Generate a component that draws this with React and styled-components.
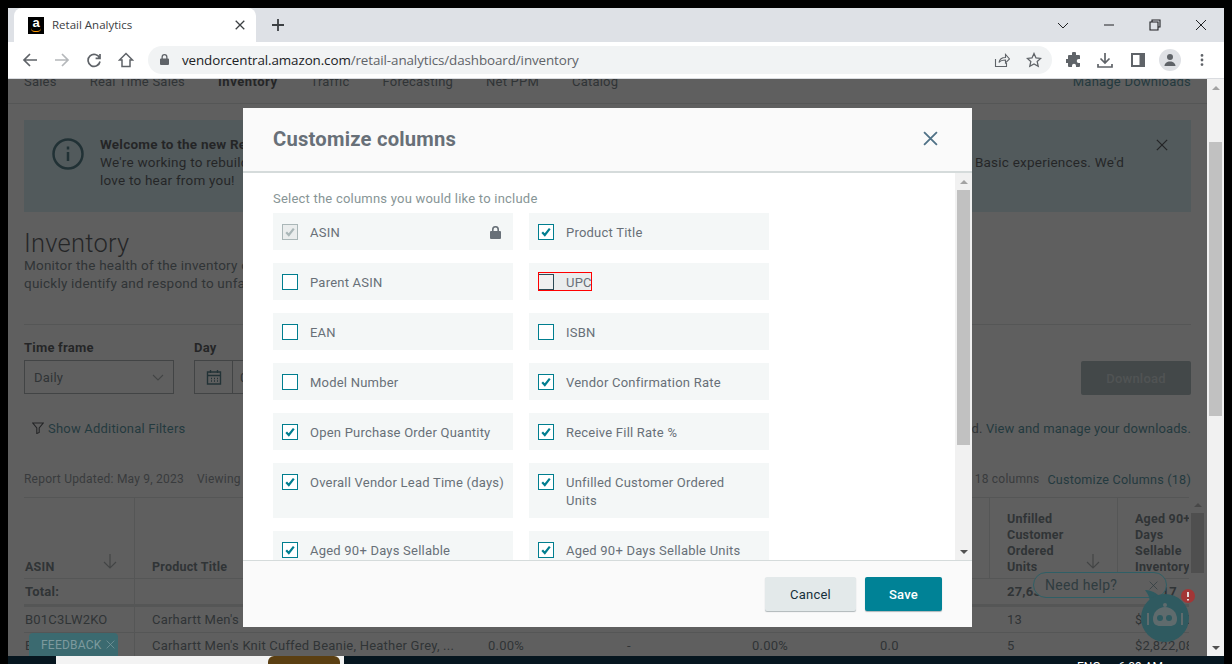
import React from 'react'
import styled, { createGlobalStyle } from 'styled-components'

const GlobalStyle = createGlobalStyle`
  html, body {
    margin: 0;
    padding: 0;
    background: #000;
    overflow: hidden;
  }
  * {
    box-sizing: border-box;
  }
`

const pageFont = `Roboto, "Liberation Sans", sans-serif`

const Screen = styled.div`
  width: 1232px;
  height: 664px;
  padding: 8px 8px 0;
  background: #000;
  overflow: hidden;
`

const Browser = styled.div`
  display: flex;
  flex-direction: column;
  height: 656px;
  font-family: ${pageFont};
`

/* browser chrome */
const TabStrip = styled.div`
  display: flex;
  align-items: stretch;
  flex: 0 0 34px;
  padding-left: 6px;
  background: #dee1e6;
`

const Tab = styled.div`
  display: flex;
  align-items: center;
  width: 242px;
  padding: 0 11px 0 14px;
  background: #fff;
  border-radius: 8px 8px 0 0;
  color: #3c4043;
  font-family: "Open Sans", sans-serif;
  font-size: 11.5px;
`

const Favicon = styled.span`
  position: relative;
  display: flex;
  justify-content: center;
  width: 16px;
  height: 17px;
  margin-right: 8px;
  background: #000;
  color: #fff;
  font-family: "Liberation Sans", sans-serif;
  font-size: 13px;
  font-weight: 700;
  line-height: 12px;

  &::after {
    content: '';
    position: absolute;
    left: 3px;
    right: 3px;
    bottom: 2px;
    height: 3px;
    border-bottom: 1.5px solid #f90;
    border-radius: 0 0 6px 6px;
  }
`

const TabTitle = styled.span`
  flex: 1;
  padding-bottom: 2px;
`

const NewTab = styled.div`
  display: flex;
  align-items: center;
  margin-left: 15px;
  color: #3c4043;
`

const WindowControls = styled.div`
  display: flex;
  align-items: center;
  gap: 34px;
  margin-left: auto;
  padding-right: 17px;
  color: #202124;
`

const Toolbar = styled.div`
  display: flex;
  align-items: center;
  flex: 0 0 37px;
  padding: 0 12px 1px 14px;
  background: #fff;
  border-bottom: 1px solid #dadce0;
`

const NavIcons = styled.div`
  display: flex;
  align-items: center;
  gap: 16px;
  width: 126px;
  color: #5f6368;
`

const Omnibox = styled.div`
  display: flex;
  align-items: center;
  width: 904px;
  height: 28px;
  padding: 0 10px 0 11px;
  border-radius: 14px;
  background: #f1f3f4;
  color: #5f6368;
`

const Url = styled.span`
  flex: 1;
  margin-left: 12px;
  color: #5f6368;
  font-family: "Open Sans", sans-serif;
  font-size: 13.4px;
  letter-spacing: -0.1px;

  b {
    color: #202124;
    font-weight: 400;
  }
`

const OmniActions = styled.div`
  display: flex;
  align-items: center;
  gap: 16px;
`

const ToolActions = styled.div`
  display: flex;
  align-items: center;
  gap: 15px;
  margin-left: 14px;
  color: #5f6368;
`

const SidebarIcon = styled.span`
  display: flex;
  margin: 0 -1px 0 3px;
`

const Avatar = styled.span`
  display: flex;
  align-items: center;
  justify-content: center;
  width: 22px;
  height: 22px;
  border-radius: 50%;
  background: #dfe1e5;
`

/* the page behind the dialog */
const Main = styled.div`
  display: flex;
  flex: 1;
  min-height: 0;
`

const Viewport = styled.div`
  position: relative;
  flex: 1;
  min-width: 0;
  overflow: hidden;
  background: #fff;
  color: #16191f;
  font-size: 13px;
  letter-spacing: 0.22px;
`

const Page = styled.div`
  margin-top: -8px;
  padding: 0 16px;
`

const NavBar = styled.div`
  display: flex;
  align-items: center;
  height: 33px;
  margin: 0 -16px;
  padding: 0 16px 12px;
  border-bottom: 1px solid #d5dbdb;
`

const NavItem = styled.span`
  margin-right: 33px;
  color: ${props => (props.$active ? '#16191f' : '#44545c')};
  font-weight: ${props => (props.$active ? 700 : 400)};
  letter-spacing: ${props => (props.$active ? 0.5 : 0.22)}px;
`

const NavRight = styled.span`
  margin-left: auto;
  color: #0f6d80;
`

const Banner = styled.div`
  position: relative;
  display: flex;
  gap: 16px;
  height: 92px;
  margin-top: 16px;
  padding: 14px 67px 0 28px;
  background: #caeaf2;
  line-height: 18px;
`

const BannerIcon = styled.span`
  padding-top: 4px;
`

const BannerText = styled.div`
  flex: 1;
  padding-top: 1px;
  font-size: 13.5px;
`

const BannerLine = styled.div`
  display: flex;
  justify-content: space-between;
`

const BannerClose = styled.span`
  position: absolute;
  top: 18px;
  right: 23px;
  color: #16191f;
`

const Heading = styled.h1`
  margin: 19px 0 0;
  color: #16191f;
  font-size: 25.5px;
  font-weight: 300;
  line-height: 25px;
`

const Intro = styled.p`
  margin: 0;
  padding-bottom: 32px;
  border-bottom: 1px solid #d5dbdb;
  color: #44545c;
  font-size: 13.5px;
  line-height: 18px;
`

const FilterRow = styled.div`
  display: flex;
  align-items: flex-start;
  height: 55px;
  margin-top: 14px;
`

const Field = styled.div`
  display: flex;
  flex-direction: column;
  gap: 4px;
  width: ${props => props.$width}px;
  margin-right: 20px;
`

const FieldLabel = styled.span`
  padding-top: 1px;
  font-weight: 700;
  line-height: 16px;
`

const SelectBox = styled.div`
  display: flex;
  align-items: center;
  justify-content: space-between;
  height: 34px;
  padding: 0 9px;
  border: 1px solid #8d9596;
  color: #44545c;
`

const DateBox = styled.div`
  display: flex;
  align-items: center;
  height: 34px;
  border: 1px solid #8d9596;
  color: #44545c;
`

const DateIcon = styled.span`
  display: flex;
  align-items: center;
  justify-content: center;
  width: 38px;
  height: 100%;
  margin-right: 7px;
  border-right: 1px solid #8d9596;
  color: #0f4c5c;
`

const DownloadButton = styled.div`
  display: flex;
  align-items: center;
  justify-content: center;
  width: 110px;
  height: 34px;
  margin: 22px 0 0 auto;
  border-radius: 2px;
  background: #8ea2a6;
  color: #c4d0d2;
  font-weight: 500;
`

const LinkRow = styled.div`
  display: flex;
  align-items: center;
  justify-content: space-between;
  height: 18px;
  margin-top: 25px;
  padding-left: 8px;
  color: #0f6d80;
  letter-spacing: 0.12px;
`

const FilterLink = styled.span`
  display: flex;
  align-items: center;
  gap: 4px;
  letter-spacing: 0.2px;
`

const PlainText = styled.span`
  color: #44545c;
`

const ReportRow = styled.div`
  display: flex;
  align-items: center;
  height: 18px;
  margin-top: 33px;
  color: #687078;
  font-size: 12px;
`

const ReportViewing = styled.span`
  margin-left: 13px;
`

const ColumnCount = styled.span`
  margin-left: auto;
`

const CustomizeLink = styled.span`
  margin-left: 8px;
  color: #0f6d80;
  font-size: 12.6px;
`

const TableWrap = styled.div`
  display: flex;
  gap: 2px;
  margin-top: 9px;
  margin-right: -16px;
`

const Table = styled.div`
  width: 1165px;
  overflow: hidden;
  border-top: 1px solid #d5dbdb;
`

const Row = styled.div`
  display: grid;
  grid-template-columns: 111px 336px 139px 125px 128px 127px 128px 200px;
  width: 1300px;
  height: ${props => props.$height}px;
  border-bottom: ${props => (props.$heavy ? 3 : 1)}px solid #d5dbdb;
  font-weight: ${props => (props.$bold ? 700 : 400)};
`

const Cell = styled.div`
  display: flex;
  align-items: center;
  padding-left: 17px;
  border-right: 1px solid ${props => (props.$lined ? '#d5dbdb' : 'transparent')};
  color: #44545c;
  white-space: nowrap;

  &:first-child {
    padding-left: 1px;
  }
`

const HeadCell = styled.div`
  position: relative;
  display: flex;
  align-items: flex-end;
  padding: 0 26px 3px 17px;
  border-right: 1px solid #d5dbdb;
  color: #44545c;
  font-size: 12.5px;
  font-weight: 700;
  line-height: 16px;

  &:first-child {
    padding-left: 1px;
  }
`

const SortArrow = styled.span`
  position: absolute;
  right: 16px;
  bottom: 5px;
  color: #8d9596;
`

const InnerScroll = styled.div`
  display: flex;
  flex-direction: column;
  flex: 0 0 13px;
  height: 76px;
`

const InnerThumb = styled.div`
  flex: 0 0 60px;
  background: #c0c0c0;
`

/* widgets that float above everything, so their colours are the ones on screen */
const FeedbackTab = styled.div`
  position: absolute;
  left: 21px;
  bottom: 0;
  display: flex;
  align-items: center;
  gap: 4px;
  width: 89px;
  height: 23px;
  padding-left: 12px;
  border-radius: 4px 4px 0 0;
  background: #3b6a70;
  color: #7d9a9e;
  font-size: 12px;
`

const HelpBubble = styled.div`
  position: absolute;
  left: 1025px;
  top: 493px;
  display: flex;
  align-items: center;
  justify-content: space-between;
  width: 134px;
  height: 26px;
  padding: 0 8px 0 11px;
  border: 1px solid #2f5f66;
  border-radius: 13px;
  background: #5f5f5f;
  color: #2f3c40;
  font-size: 14px;
  letter-spacing: 0.3px;
`

const Bot = styled.svg`
  position: absolute;
  left: 1132px;
  top: 506px;
`

const PageScroll = styled.div`
  display: flex;
  flex-direction: column;
  flex: 0 0 17px;
  padding: 0 2px;
  background: #f1f1f1;
`

const ScrollArrow = styled.div`
  display: flex;
  justify-content: center;
  flex: 0 0 ${props => props.$size || 17}px;
  align-items: center;
  color: ${props => (props.$dark ? '#505050' : '#a3a3a3')};

  &::after {
    content: '';
    border-left: 4px solid transparent;
    border-right: 4px solid transparent;
    border-${props => (props.$down ? 'top' : 'bottom')}: 4px solid currentColor;
  }
`

const ScrollThumb = styled.div`
  flex: 0 0 ${props => props.$height}px;
  margin-top: ${props => props.$top}px;
  background: #c1c1c1;
`

const ScrollSpace = styled.div`
  flex: 1;
`

const Taskbar = styled.div`
  display: flex;
  flex: 0 0 8px;
  overflow: hidden;
  background: #06161f;
  color: #fff;
  font-size: 12px;
`

const TaskbarPanel = styled.div`
  display: flex;
  justify-content: flex-end;
  width: 288px;
  height: 8px;
  margin-left: 48px;
  padding-right: 4px;
  background: #f3f3f3;
`

const TaskbarThumb = styled.div`
  width: 72px;
  height: 8px;
  border-radius: 6px 6px 0 0;
  background: #5b3f12;
`

const TaskbarClock = styled.div`
  display: flex;
  gap: 18px;
  margin-left: 733px;
  padding-top: 4px;
  line-height: 14px;
`

/* dialog */
const Overlay = styled.div`
  position: absolute;
  inset: 0;
  display: flex;
  justify-content: center;
  align-items: flex-start;
  padding-top: 29px;
  background: rgba(42, 42, 42, 0.75);
`

const Modal = styled.div`
  display: flex;
  flex-direction: column;
  width: 729px;
  height: 519px;
  background: #fff;
  font-size: 13px;
`

const ModalHeader = styled.div`
  display: flex;
  align-items: center;
  justify-content: space-between;
  flex: 0 0 65px;
  padding: 0 34px 2px 30px;
  background: #fafafa;
  border-bottom: 2px solid #d5dbdb;
`

const ModalTitle = styled.h2`
  margin: 0;
  color: #687078;
  font-size: 20.2px;
  font-weight: 700;
`

const CloseButton = styled.span`
  display: flex;
  color: #4f7186;
`

const ModalBody = styled.div`
  display: flex;
  flex: 1;
  min-height: 0;
`

const ModalContent = styled.div`
  flex: 1;
  overflow: hidden;
  padding: 17px 0 0 30px;
`

const Hint = styled.p`
  margin: 0 0 5px;
  color: #879596;
  font-size: 13px;
  line-height: 18px;
`

const ColumnGrid = styled.div`
  display: grid;
  grid-template-columns: 240px 240px;
  gap: 13px 16px;
`

const Option = styled.div`
  display: flex;
  align-items: flex-start;
  padding: 10px 0 8px 9px;
  background: #f4f7f7;
`

const Highlight = styled.span`
  display: flex;
  width: 52px;
  height: 17px;
  margin-left: 1px;
  background: #eaeded;
  outline: 1px solid #f00;
`

const Check = styled.span`
  display: flex;
  align-items: center;
  justify-content: center;
  flex: 0 0 16px;
  height: 16px;
  margin: 1px 12px 0 ${props => (props.$hover ? -1 : 0)}px;
  border: 1px solid ${props => (props.$disabled ? '#aab7b8' : props.$hover ? '#2b4a55' : '#007e8f')};
  background: ${props => (props.$disabled ? '#eaeded' : props.$hover ? '#f0f0f0' : '#fff')};
  color: ${props => (props.$disabled ? '#aab7b8' : '#007e8f')};
`

const OptionLabel = styled.span`
  max-width: ${props => (props.$wrapAt ? `${props.$wrapAt}px` : 'none')};
  margin-top: 1px;
  color: #687078;
  line-height: 18px;
  white-space: ${props => (props.$wrapAt ? 'normal' : 'nowrap')};
`

const LockIcon = styled.svg`
  margin: 3px 12px 0 auto;
  color: #687078;
`

const ModalFooter = styled.div`
  display: flex;
  align-items: center;
  justify-content: flex-end;
  gap: 9px;
  flex: 0 0 67px;
  padding: 0 30px 0 0;
  background: #fafafa;
  border-top: 1px solid #d5dbdb;
`

const FooterButton = styled.button`
  width: ${props => props.$width}px;
  height: 34px;
  border: 0;
  border-radius: 2px;
  background: ${props => (props.$primary ? '#008296' : '#e3e9ea')};
  box-shadow: 0 1px 1px rgba(0, 28, 36, 0.3);
  color: ${props => (props.$primary ? '#fff' : '#16303a')};
  font-family: inherit;
  font-size: 13px;
  letter-spacing: 0.22px;
  font-weight: ${props => (props.$primary ? 500 : 400)};
`

const Glyph = ({ size = 16, children, fill = 'none', stroke = 'currentColor', width = 2, view = 24 }) => (
  <svg
    width={size}
    height={size}
    viewBox={`0 0 ${view} ${view}`}
    fill={fill}
    stroke={stroke}
    strokeWidth={width}
  >
    {children}
  </svg>
)

const Cross = ({ size = 14, width = 1.6 }) => (
  <Glyph size={size} view={14} width={width}>
    <path d="M1 1l12 12M13 1L1 13" />
  </Glyph>
)

const Tick = () => (
  <Glyph size={12} view={12} width={2.2}>
    <path d="M2.2 6.2l2.6 2.8 5-6.4" />
  </Glyph>
)

const DownArrow = () => (
  <Glyph size={16} view={16} width={1.2}>
    <path d="M8 1v14M2 9l6 6 6-6" />
  </Glyph>
)

const options = [
  { label: 'ASIN', state: 'disabled' },
  { label: 'Product Title', state: 'on' },
  { label: 'Parent ASIN', state: 'off' },
  { label: 'UPC', state: 'hover' },
  { label: 'EAN', state: 'off' },
  { label: 'ISBN', state: 'off' },
  { label: 'Model Number', state: 'off' },
  { label: 'Vendor Confirmation Rate', state: 'on' },
  { label: 'Open Purchase Order Quantity', state: 'on' },
  { label: 'Receive Fill Rate %', state: 'on' },
  { label: 'Overall Vendor Lead Time (days)', state: 'on' },
  { label: 'Unfilled Customer Ordered Units', state: 'on', wrapAt: 175 },
  { label: 'Aged 90+ Days Sellable', state: 'on' },
  { label: 'Aged 90+ Days Sellable Units', state: 'on' },
]

const ColumnOption = ({ label, state, wrapAt }) => {
  const box = (
    <Check $disabled={state === 'disabled'} $hover={state === 'hover'}>
      {(state === 'on' || state === 'disabled') && <Tick />}
    </Check>
  )
  if (state === 'hover') {
    return (
      <Option>
        <Highlight>
          {box}
          <OptionLabel>{label}</OptionLabel>
        </Highlight>
      </Option>
    )
  }
  return (
    <Option>
      {box}
      <OptionLabel $wrapAt={wrapAt}>{label}</OptionLabel>
      {state === 'disabled' && (
        <LockIcon width="11" height="13" viewBox="0 0 11 13" fill="currentColor">
          <path d="M5.5 0A3.4 3.4 0 0 0 2 3.4V5H1a1 1 0 0 0-1 1v6a1 1 0 0 0 1 1h9a1 1 0 0 0 1-1V6a1 1 0 0 0-1-1H9V3.4A3.4 3.4 0 0 0 5.5 0zM3.6 5V3.4a1.9 1.9 0 0 1 3.8 0V5z" />
        </LockIcon>
      )}
    </Option>
  )
}

const CustomizeDialog = () => (
  <Overlay>
    <Modal>
      <ModalHeader>
        <ModalTitle>Customize columns</ModalTitle>
        <CloseButton>
          <Cross size={15} width={1.7} />
        </CloseButton>
      </ModalHeader>
      <ModalBody>
        <ModalContent>
          <Hint>Select the columns you would like to include</Hint>
          <ColumnGrid>
            {options.map(option => (
              <ColumnOption key={option.label} {...option} />
            ))}
          </ColumnGrid>
        </ModalContent>
        <PageScroll>
          <ScrollArrow />
          <ScrollThumb $height={255} $top={0} />
          <ScrollSpace />
          <ScrollArrow $down $dark />
        </PageScroll>
      </ModalBody>
      <ModalFooter>
        <FooterButton $width={91}>Cancel</FooterButton>
        <FooterButton $width={77} $primary>Save</FooterButton>
      </ModalFooter>
    </Modal>
  </Overlay>
)

const BrowserChrome = () => (
  <>
    <TabStrip>
      <Tab>
        <Favicon>a</Favicon>
        <TabTitle>Retail Analytics</TabTitle>
        <Cross size={10} width={1.8} />
      </Tab>
      <NewTab>
        <Glyph size={14} view={14} width={1.8}>
          <path d="M7 1v12M1 7h12" />
        </Glyph>
      </NewTab>
      <WindowControls>
        <Glyph size={12} view={12} width={1}>
          <path d="M1 4l5 5 5-5" />
        </Glyph>
        <Glyph size={12} view={12} width={1}>
          <path d="M1 6h10" />
        </Glyph>
        <Glyph size={12} view={12} width={1.1}>
          <path d="M3 3V1h8v7H9M1 3h8v8H1z" />
        </Glyph>
        <Glyph size={12} view={12} width={1}>
          <path d="M1 1l10 10M11 1L1 11" />
        </Glyph>
      </WindowControls>
    </TabStrip>
    <Toolbar>
      <NavIcons>
        <Glyph size={16} view={16} width={1.7}>
          <path d="M15 8H2M8 2L2 8l6 6" />
        </Glyph>
        <Glyph size={16} view={16} width={1.7} stroke="#b5b8bb">
          <path d="M1 8h13M8 2l6 6-6 6" />
        </Glyph>
        <Glyph size={16} view={16} width={1.7}>
          <path d="M13.6 6A6 6 0 1 0 14 9.5M14 2v4.4H9.6" />
        </Glyph>
        <Glyph size={16} view={16} width={1.5}>
          <path d="M8 1.5L1.5 8H4v6.5h8V8h2.500z" />
        </Glyph>
      </NavIcons>
      <Omnibox>
        <Glyph size={11} view={11} fill="currentColor" stroke="none">
          <path d="M5.500 0A3 3 0 0 0 2.500 3v1.500H2a1 1 0 0 0-1 1V10a1 1 0 0 0 1 1h7a1 1 0 0 0 1-1V5.500a1 1 0 0 0-1-1h-.5V3a3 3 0 0 0-3-3zM3.800 4.500V3a1.700 1.700 0 0 1 3.400 0v1.500z" />
        </Glyph>
        <Url>
          <b>vendorcentral.amazon.com</b>/retail-analytics/dashboard/inventory
        </Url>
        <OmniActions>
          <Glyph size={16} view={16} width={1.1}>
            <path d="M1.500 7v7.500h11V11M5 10.500c.5-3 3-5 6.500-5V2.500l4 4.500-4 4V8C9 8 6.500 8.500 5 10.500z" />
          </Glyph>
          <Glyph size={16} view={16} width={1.3}>
            <path d="M8 1.500l2 4.400 4.700.5-3.500 3.200 1 4.700L8 12l-4.200 2.300 1-4.700L1.300 6.400 6 5.900z" />
          </Glyph>
        </OmniActions>
      </Omnibox>
      <ToolActions>
        <Glyph size={16} view={16} fill="currentColor" stroke="none">
          <path d="M6 1.500a2 2 0 0 1 4 0V3h3a1 1 0 0 1 1 1v3h-1.300a2 2 0 0 0 0 4H14v3a1 1 0 0 1-1 1h-3v-1.300a2 2 0 0 0-4 0V15H3a1 1 0 0 1-1-1v-3H.8a2 2 0 0 1 0-4H2V4a1 1 0 0 1 1-1h3z" />
        </Glyph>
        <Glyph size={16} view={16} width={1.7}>
          <path d="M8 1v9.500M3.500 6.500L8 11l4.500-4.500M1 12v3h14v-3" />
        </Glyph>
        <SidebarIcon>
          <Glyph size={14} view={14} fill="currentColor" stroke="none">
            <path fillRule="evenodd" d="M0 0h14v14H0zM2 2v10h6.500V2z" />
          </Glyph>
        </SidebarIcon>
        <Avatar>
          <Glyph size={14} view={14} fill="currentColor" stroke="none">
            <path d="M7 1a3 3 0 1 1 0 6 3 3 0 0 1 0-6zM1.500 13c0-2.700 2.500-4.500 5.500-4.500s5.500 1.800 5.500 4.500z" />
          </Glyph>
        </Avatar>
        <Glyph size={12} view={12} fill="currentColor" stroke="none">
          <path d="M6 0a1.400 1.400 0 1 1 0 2.800A1.400 1.400 0 0 1 6 0zM6 4.600a1.400 1.400 0 1 1 0 2.800 1.400 1.400 0 0 1 0-2.800zM6 9.200a1.400 1.400 0 1 1 0 2.800 1.400 1.400 0 0 1 0-2.800z" />
        </Glyph>
      </ToolActions>
    </Toolbar>
  </>
)

const InventoryPage = () => (
  <Page>
    <NavBar>
      <NavItem>Sales</NavItem>
      <NavItem>Real Time Sales</NavItem>
      <NavItem $active>Inventory</NavItem>
      <NavItem>Traffic</NavItem>
      <NavItem>Forecasting</NavItem>
      <NavItem>Net PPM</NavItem>
      <NavItem>Catalog</NavItem>
      <NavRight>Manage Downloads</NavRight>
    </NavBar>
    <Banner>
      <BannerIcon>
        <Glyph size={32} view={32} width={2.5} stroke="#0a4a5a">
          <circle cx="16" cy="16" r="14.500" />
          <path d="M16 14v9M16 8.500v3" />
        </Glyph>
      </BannerIcon>
      <BannerText>
        <b>Welcome to the new Retail Analytics</b>
        <BannerLine>
          <span>We're working to rebuild Retail Analytics</span>
          <span>. Basic experiences. We'd</span>
        </BannerLine>
        love to hear from you!
      </BannerText>
      <BannerClose>
        <Cross size={12} width={1.5} />
      </BannerClose>
    </Banner>
    <Heading>Inventory</Heading>
    <Intro>
      Monitor the health of the inventory on hand
      <br />
      quickly identify and respond to unfavorable trends
    </Intro>
    <FilterRow>
      <Field $width={150}>
        <FieldLabel>Time frame</FieldLabel>
        <SelectBox>
          Daily
          <Glyph size={12} view={12} width={1.1} stroke="#8d9596">
            <path d="M1 4l5 5 5-5" />
          </Glyph>
        </SelectBox>
      </Field>
      <Field $width={200}>
        <FieldLabel>Day</FieldLabel>
        <DateBox>
          <DateIcon>
            <Glyph size={16} view={16} width={1.4}>
              <path d="M1.500 3h13v12h-13zM1.500 6.500h13M4.500 1v3M11.500 1v3M5 9.500h1M8 9.500h1M11 9.500h1M5 12h1M8 12h1M11 12h1" />
            </Glyph>
          </DateIcon>
          05/09/2023
        </DateBox>
      </Field>
      <DownloadButton>Download</DownloadButton>
    </FilterRow>
    <LinkRow>
      <FilterLink>
        <Glyph size={12} view={12} width={1.1} stroke="#16191f">
          <path d="M.8 1h10.400L7.200 6v4.500L4.800 11.500V6z" />
        </Glyph>
        Show Additional Filters
      </FilterLink>
      <span>
        <PlainText>Report requested. </PlainText>
        View and manage your downloads.
      </span>
    </LinkRow>
    <ReportRow>
      Report Updated: May 9, 2023
      <ReportViewing>Viewing</ReportViewing>
      <ColumnCount>18 of 18 columns</ColumnCount>
      <CustomizeLink>Customize Columns (18)</CustomizeLink>
    </ReportRow>
    <TableWrap>
      <Table>
        <Row $height={81}>
          <HeadCell>
            ASIN
            <SortArrow>
              <DownArrow />
            </SortArrow>
          </HeadCell>
          <HeadCell>Product Title</HeadCell>
          <HeadCell />
          <HeadCell />
          <HeadCell />
          <HeadCell />
          <HeadCell>
            <span>
              Unfilled
              <br />
              Customer
              <br />
              Ordered
              <br />
              Units
            </span>
            <SortArrow>
              <DownArrow />
            </SortArrow>
          </HeadCell>
          <HeadCell>
            <span>
              Aged 90+
              <br />
              Days
              <br />
              Sellable
              <br />
              Inventory
            </span>
          </HeadCell>
        </Row>
        <Row $height={28} $heavy $bold>
          <Cell $lined>Total:</Cell>
          <Cell $lined />
          <Cell />
          <Cell />
          <Cell />
          <Cell />
          <Cell>27,635</Cell>
          <Cell>$1,917</Cell>
        </Row>
        <Row $height={26}>
          <Cell $lined>B01C3LW2KO</Cell>
          <Cell>Carhartt Men's Knit Cuffed Beanie</Cell>
          <Cell>0.00%</Cell>
          <Cell>-</Cell>
          <Cell>0.00%</Cell>
          <Cell>0.0</Cell>
          <Cell>13</Cell>
          <Cell>$1,245,600</Cell>
        </Row>
        <Row $height={26}>
          <Cell $lined>B01C3LW2KP</Cell>
          <Cell>Carhartt Men's Knit Cuffed Beanie, Heather Grey, ...</Cell>
          <Cell>0.00%</Cell>
          <Cell>-</Cell>
          <Cell>0.00%</Cell>
          <Cell>0.0</Cell>
          <Cell>5</Cell>
          <Cell>$2,822,080</Cell>
        </Row>
      </Table>
      <InnerScroll>
        <ScrollArrow $size={16} />
        <InnerThumb />
      </InnerScroll>
    </TableWrap>
  </Page>
)

const App = () => (
  <Screen>
    <GlobalStyle />
    <Browser>
      <BrowserChrome />
      <Main>
        <Viewport>
          <InventoryPage />
          <CustomizeDialog />
          <FeedbackTab>
            FEEDBACK
            <Cross size={9} width={1.1} />
          </FeedbackTab>
          <HelpBubble>
            Need help?
            <Cross size={9} width={1.1} />
          </HelpBubble>
          <Bot width="58" height="62" viewBox="0 0 58 62">
            <path d="M5 5c8 0 15 5 20 13L10 24C11 16 9 10 5 5z" fill="#2f5a60" />
            <circle cx="25" cy="33" r="24" fill="#2f5a60" />
            <circle cx="25" cy="20" r="2" fill="#5f6b6d" />
            <path d="M13 34a12 12 0 0 1 24 0c0 5-3 7-7 7H20c-4 0-7-2-7-7z" fill="#5f6b6d" />
            <path d="M8 28v12M42 28v12" stroke="#5f6b6d" strokeWidth="2" />
            <circle cx="20" cy="33" r="3" fill="#2f5a60" />
            <circle cx="29" cy="33" r="3" fill="#2f5a60" />
            <circle cx="48" cy="11" r="7" fill="#a33636" />
            <path d="M48 7v5M48 14v1.500" stroke="#eee" strokeWidth="1.800" />
          </Bot>
        </Viewport>
        <PageScroll>
          <ScrollArrow />
          <ScrollThumb $height={274} $top={46} />
          <ScrollSpace />
          <ScrollArrow $down $dark />
        </PageScroll>
      </Main>
      <Taskbar>
        <TaskbarPanel>
          <TaskbarThumb />
        </TaskbarPanel>
        <TaskbarClock>
          <span>ENG</span>
          <span>6:09 AM</span>
        </TaskbarClock>
      </Taskbar>
    </Browser>
  </Screen>
)

export default App
